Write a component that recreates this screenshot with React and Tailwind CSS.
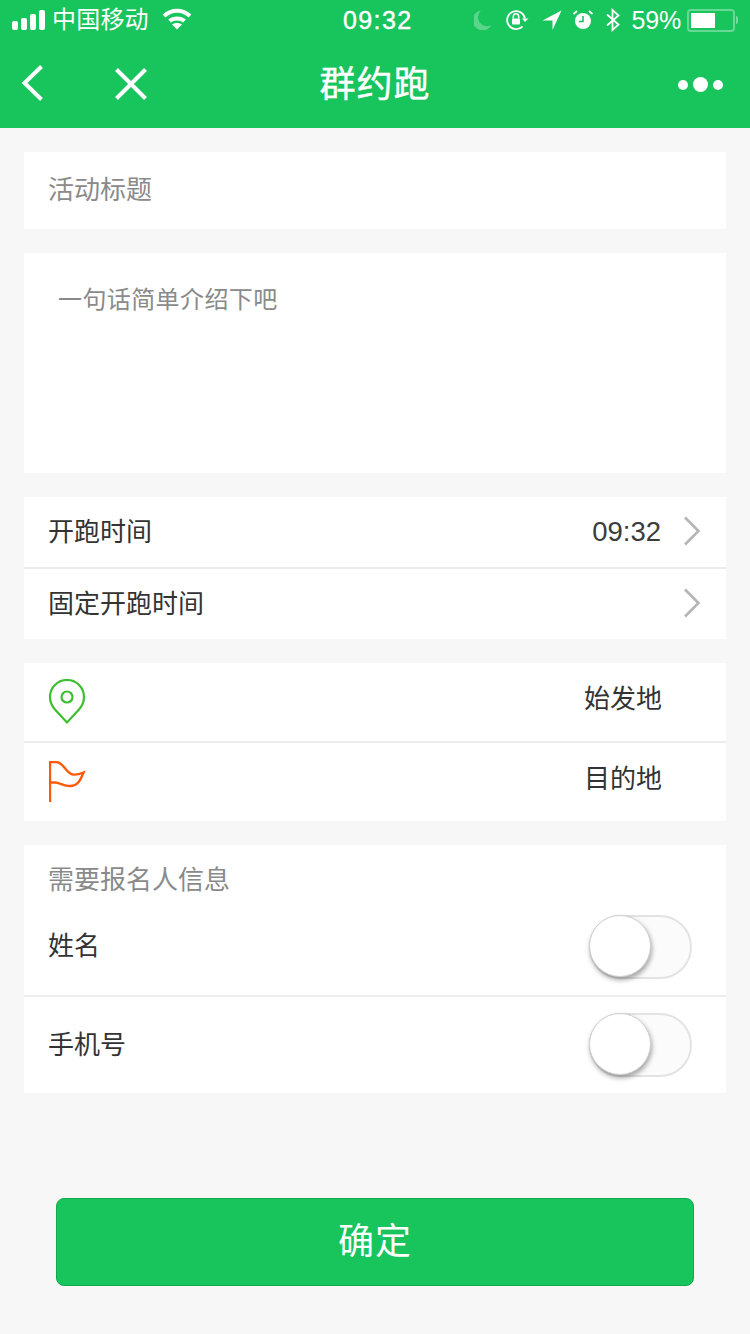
const FONT = "font-['Liberation_Sans','Noto_Sans_CJK_SC',sans-serif]";

const Signal = () => (
  <div className="flex items-end gap-[3px] h-[20px] mt-[-1px]">
    <div className="w-[6px] h-[9px] rounded-[2px] bg-white" />
    <div className="w-[6px] h-[12px] rounded-[2px] bg-white" />
    <div className="w-[6px] h-[16px] rounded-[2px] bg-white" />
    <div className="w-[6px] h-[20px] rounded-[2px] bg-white" />
  </div>
);

const Wifi = () => (
  <svg width="30" height="22" viewBox="0 0 30 22" fill="none" stroke="white" strokeWidth="4">
    <path d="M2 8C9.5 1 20.5 1 28 8" />
    <path d="M7.5 13C11.5 9.5 18.5 9.5 22.5 13" />
    <path d="M15 21.5L10 16.5C13 14.5 17 14.5 20 16.5Z" fill="white" stroke="none" />
  </svg>
);

const Moon = () => (
  <svg width="18" height="20" viewBox="0 0 18 20" className="opacity-30">
    <path d="M7 0.5A10 10 0 1 0 17.5 15 A9 9 0 0 1 7 0.5Z" fill="white" />
  </svg>
);

const RotationLock = () => (
  <svg width="24" height="22" viewBox="0 0 24 22" fill="none" stroke="white" strokeWidth="1.8">
    <path d="M20 9.5A9 9 0 1 0 17.5 17.5" />
    <path d="M17 9.5L20 13L23.5 9.5" fill="white" stroke="none" />
    <path d="M8.3 9.5V7.5A2.7 2.7 0 0 1 13.7 7.5V9.5" strokeWidth="1.5" />
    <rect x="7" y="9.5" width="8" height="6" rx="1" fill="white" stroke="none" />
  </svg>
);

const Location = () => (
  <svg width="20" height="20" viewBox="0 0 20 20">
    <path d="M19.5 0.5L0.5 10.5L10.5 10.5L10.5 20Z" fill="white" />
  </svg>
);

const Alarm = () => (
  <svg width="20" height="20" viewBox="0 0 20 20">
    <circle cx="10" cy="11" r="8" fill="white" />
    <path d="M10 6V11.5H6" stroke="#18c45c" strokeWidth="1.6" fill="none" />
    <path d="M0.5 4L4 1M19.5 4L16 1" stroke="white" strokeWidth="1.8" fill="none" />
  </svg>
);

const Bluetooth = () => (
  <svg width="16" height="24" viewBox="0 0 16 24" fill="none" stroke="white" strokeWidth="1.8">
    <path d="M2 6.5L13.5 16.5L7.5 22V2L13.5 7.5L2 17.5" />
  </svg>
);

const Battery = () => (
  <div className="flex items-center gap-[1px]">
    <div className="w-[48px] h-[23px] rounded-[4px] border-2 border-white/35 p-[2px] flex">
      <div className="w-[24px] h-full bg-white" />
    </div>
    <div className="w-[2px] h-[8px] rounded-r-[2px] bg-white/40" />
  </div>
);

const StatusBar = () => (
  <div className="relative h-[40px] pl-[12px] pr-[12px] flex items-center justify-between text-white">
    <div className="flex items-center">
      <Signal />
      <span className="ml-[7px] text-[24px] leading-[40px] tracking-[0.2px]">中国移动</span>
      <div className="ml-[13px] mt-[-2px]"><Wifi /></div>
    </div>
    <span className="absolute left-[343px] top-0 text-[25px] leading-[40px] tracking-[1.4px] [-webkit-text-stroke:0.4px_white]">09:32</span>
    <div className="flex items-center">
      <Moon />
      <div className="ml-[13px]"><RotationLock /></div>
      <div className="ml-[13px]"><Location /></div>
      <div className="ml-[11px]"><Alarm /></div>
      <div className="ml-[12px]"><Bluetooth /></div>
      <span className="ml-[11px] text-[25px] leading-[40px] tracking-[-0.2px]">59%</span>
      <div className="ml-[6px]"><Battery /></div>
    </div>
  </div>
);

const NavBar = () => (
  <div className="relative h-[88px] pt-[2px] flex items-center justify-center text-white">
    <div className="absolute left-[21px] top-[24px]">
      <svg width="24" height="38" viewBox="0 0 24 38" fill="none" stroke="white" strokeWidth="4">
        <path d="M20.5 2.5L3.5 19L20.5 35.5" />
      </svg>
    </div>
    <div className="absolute left-[114px] top-[27px]">
      <svg width="34" height="34" viewBox="0 0 34 34" fill="none" stroke="white" strokeWidth="4">
        <path d="M2.5 2.5L31.5 31.5M31.5 2.5L2.5 31.5" />
      </svg>
    </div>
    <span className="text-[36px] leading-[44px] tracking-[1px] [-webkit-text-stroke:0.4px_white]">群约跑</span>
    <div className="absolute left-[678px] top-[37px] flex items-center gap-[5px]">
      <div className="w-[10px] h-[10px] rounded-full bg-white" />
      <div className="w-[15px] h-[15px] rounded-full bg-white" />
      <div className="w-[10px] h-[10px] rounded-full bg-white" />
    </div>
  </div>
);

const Chevron = () => (
  <svg width="18" height="30" viewBox="0 0 18 30" fill="none" stroke="#b5b5b5" strokeWidth="2.6" className="mt-[-2px]">
    <path d="M2 1.5L15.5 15L2 28.5" />
  </svg>
);

const Toggle = () => (
  <div className="relative w-[103px] h-[64px] rounded-full border-2 border-[#e2e4e2] bg-[#fbfbfb]">
    <div className="absolute left-[-2px] top-[-2px] w-[62px] h-[62px] rounded-full bg-white border border-[#d0d0d0] shadow-[1px_3px_5px_rgba(0,0,0,0.35)]" />
  </div>
);

const Pin = () => (
  <svg width="38" height="46" viewBox="0 0 38 46" fill="none" stroke="#3cbf2f" strokeWidth="2.2">
    <path d="M18 43.5L6 30.5C2 26 1 22 1 18C1 8.5 8.5 1 18 1C27.5 1 35 8.5 35 18C35 22 34 26 30 30.5Z" />
    <circle cx="18" cy="18" r="5.5" />
  </svg>
);

const Flag = () => (
  <svg width="38" height="42" viewBox="0 0 38 42" fill="none" stroke="#ff5a0a" strokeWidth="2.4">
    <path d="M1 41V1H7C15 1 16 12 24 13.5C28 14 31 13 34.5 11.5C32 18 29 25 21 25C14 25 11 21.5 6 21.5H1" />
  </svg>
);

const Divider = () => <div className="h-[2px] bg-[#ececec]" />;

export default function App() {
  return (
    <div className={`w-[750px] h-[1334px] bg-[#f7f7f7] flex flex-col ${FONT}`}>
      <div className="bg-[#18c45c]">
        <StatusBar />
        <NavBar />
      </div>

      <div className="px-[24px] pt-[24px] flex flex-col gap-[24px] text-[#333333] text-[26px]">
        <div className="h-[77px] bg-white pl-[24px] flex items-center text-[#8a8a8a]">活动标题</div>

        <div className="h-[220px] bg-white pl-[34px] pt-[28px] text-[24px] text-[#8a8a8a] leading-[38px] tracking-[0.4px]">一句话简单介绍下吧</div>

        {/* 开跑时间 */}
        <div className="bg-white pl-[24px] pr-[25px]">
          <div className="h-[70px] flex items-center justify-between">
            <span>开跑时间</span>
            <div className="flex items-center gap-[22px]">
              <span className="text-[27.5px] text-[#3c3c3c]">09:32</span>
              <Chevron />
            </div>
          </div>
          <div className="mr-[-25px] ml-[-24px]"><Divider /></div>
          <div className="h-[70px] flex items-center justify-between">
            <span className="pt-[1px]">固定开跑时间</span>
            <Chevron />
          </div>
        </div>

        {/* 地点 */}
        <div className="bg-white">
          <div className="h-[78px] pl-[25px] pr-[64px] flex items-center justify-between">
            <Pin />
            <span className="pb-[6px]">始发地</span>
          </div>
          <Divider />
          <div className="h-[78px] pl-[25px] pr-[64px] flex items-center justify-between">
            <Flag />
            <span className="pb-[6px]">目的地</span>
          </div>
        </div>

        {/* 报名信息 */}
        <div className="bg-white">
          <div className="pl-[24px] pt-[17px] leading-[36px] text-[#8a8a8a]">需要报名人信息</div>
          <div className="h-[97px] pl-[24px] pr-[34px] flex items-center justify-between">
            <span>姓名</span>
            <Toggle />
          </div>
          <Divider />
          <div className="h-[96px] pl-[24px] pr-[34px] flex items-center justify-between">
            <span>手机号</span>
            <Toggle />
          </div>
        </div>

        <button className="mx-[32px] mt-[81px] h-[88px] rounded-[8px] bg-[#18c45c] border border-[#10a94d] text-white text-[36px] tracking-[1px]">确定</button>
      </div>
    </div>
  );
}
